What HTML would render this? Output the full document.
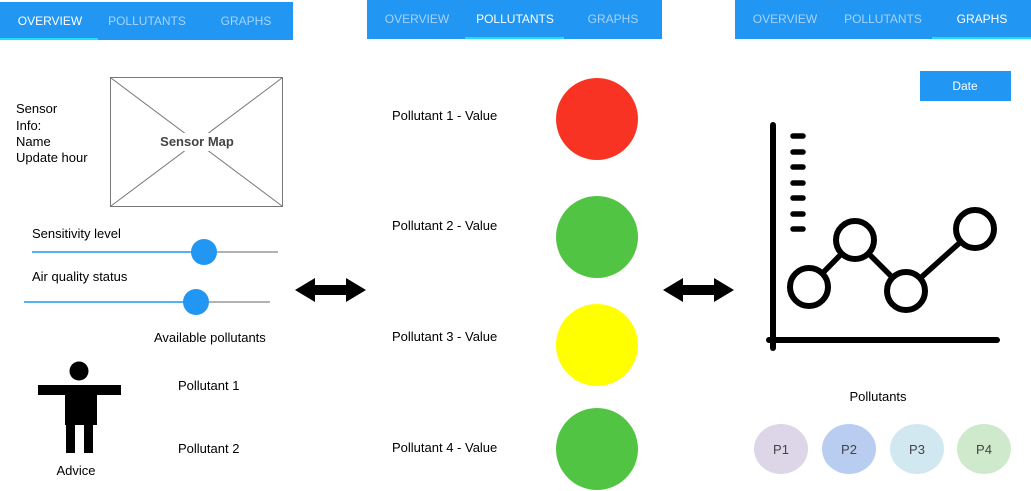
<!DOCTYPE html>
<html><head><style>
html,body{margin:0;padding:0;background:#fff;}
svg{display:block;font-family:"Liberation Sans",Arial,sans-serif;}
</style></head><body>
<svg width="1031" height="491" viewBox="0 0 1031 491" xmlns="http://www.w3.org/2000/svg">
<rect x="0" y="2" width="293" height="38" fill="#2196f3"/>
<rect x="0" y="38" width="98" height="2" fill="#18e0ff"/>
<g font-size="12" text-anchor="middle">
<text x="50" y="25" fill="#fff">OVERVIEW</text>
<text x="147" y="25" fill="#a6d4fa">POLLUTANTS</text>
<text x="246" y="25" fill="#a6d4fa">GRAPHS</text>
</g>
<rect x="367" y="0" width="295" height="39" fill="#2196f3"/>
<rect x="465" y="37" width="99" height="2" fill="#18e0ff"/>
<g font-size="12" text-anchor="middle">
<text x="417" y="23" fill="#a6d4fa">OVERVIEW</text>
<text x="515" y="23" fill="#fff">POLLUTANTS</text>
<text x="613" y="23" fill="#a6d4fa">GRAPHS</text>
</g>
<rect x="735" y="0" width="296" height="39" fill="#2196f3"/>
<rect x="932" y="37" width="99" height="2" fill="#18e0ff"/>
<g font-size="12" text-anchor="middle">
<text x="785" y="23" fill="#a6d4fa">OVERVIEW</text>
<text x="883" y="23" fill="#a6d4fa">POLLUTANTS</text>
<text x="982" y="23" fill="#fff">GRAPHS</text>
</g>
<g font-size="13" fill="#000">
<text x="16" y="113">Sensor</text>
<text x="16" y="130">Info:</text>
<text x="16" y="146">Name</text>
<text x="16" y="162">Update hour</text>
</g>
<rect x="110.5" y="77.5" width="172" height="129" fill="none" stroke="#777" stroke-width="1"/>
<line x1="111" y1="78" x2="282" y2="206" stroke="#777"/>
<line x1="282" y1="78" x2="111" y2="206" stroke="#777"/>
<rect x="155" y="133" width="82" height="18" fill="#fff"/>
<text x="197" y="146" font-size="13" font-weight="bold" fill="#444" text-anchor="middle">Sensor Map</text>
<text x="32" y="238" font-size="13">Sensitivity level</text>
<line x1="32" y1="252" x2="204" y2="252" stroke="#2196f3" stroke-width="1.5"/>
<line x1="204" y1="252" x2="278" y2="252" stroke="#999" stroke-width="1.5"/>
<circle cx="204" cy="252" r="13" fill="#2196f3"/>
<text x="32" y="281" font-size="13">Air quality status</text>
<line x1="24" y1="302" x2="196" y2="302" stroke="#2196f3" stroke-width="1.5"/>
<line x1="196" y1="302" x2="270" y2="302" stroke="#999" stroke-width="1.5"/>
<circle cx="196" cy="302" r="13" fill="#2196f3"/>
<text x="154" y="342" font-size="13">Available pollutants</text>
<text x="178" y="390" font-size="13">Pollutant 1</text>
<text x="178" y="453" font-size="13">Pollutant 2</text>
<circle cx="79" cy="371" r="9.5"/>
<rect x="38" y="385" width="83" height="10"/>
<rect x="65" y="385" width="32" height="40"/>
<rect x="66" y="420" width="9" height="33"/>
<rect x="84" y="420" width="9" height="33"/>
<text x="76" y="475" font-size="13" text-anchor="middle">Advice</text>
<polygon points="295,290 315,278 315,285 346,285 346,278 366,290 346,302 346,295 315,295 315,302"/>
<polygon points="663,290 683,278 683,285 714,285 714,278 734,290 714,302 714,295 683,295 683,302"/>
<g font-size="13">
<text x="392" y="120">Pollutant 1 - Value</text>
<text x="392" y="230">Pollutant 2 - Value</text>
<text x="392" y="341">Pollutant 3 - Value</text>
<text x="392" y="452">Pollutant 4 - Value</text>
</g>
<circle cx="597" cy="119" r="41" fill="#f93324"/>
<circle cx="597" cy="237" r="41" fill="#52c443"/>
<circle cx="597" cy="345" r="41" fill="#ffff00"/>
<circle cx="597" cy="449" r="41" fill="#52c443"/>
<rect x="920" y="71" width="91" height="30" fill="#2196f3"/>
<text x="965" y="90" font-size="12" fill="#fff" text-anchor="middle">Date</text>
<g stroke="#000" stroke-linecap="round" fill="none">
<line x1="773" y1="125" x2="773" y2="348" stroke-width="6"/>
<line x1="769" y1="340" x2="997" y2="340" stroke-width="6"/>
<g stroke-width="5.5">
<line x1="793" y1="136" x2="803" y2="136"/>
<line x1="793" y1="152" x2="803" y2="152"/>
<line x1="793" y1="167" x2="803" y2="167"/>
<line x1="793" y1="183" x2="803" y2="183"/>
<line x1="793" y1="198" x2="803" y2="198"/>
<line x1="793" y1="214" x2="803" y2="214"/>
<line x1="793" y1="229" x2="803" y2="229"/>
</g>
<g stroke-width="5.5">
<line x1="809" y1="287" x2="855" y2="240"/>
<line x1="855" y1="240" x2="906" y2="291"/>
<line x1="906" y1="291" x2="975" y2="229"/>
</g>
<g stroke-width="6" fill="#fff">
<circle cx="809" cy="287" r="19"/>
<circle cx="855" cy="240" r="19"/>
<circle cx="906" cy="291" r="19"/>
<circle cx="975" cy="229" r="19"/>
</g>
</g>
<text x="878" y="401" font-size="13" text-anchor="middle">Pollutants</text>
<ellipse cx="781" cy="449" rx="27" ry="25" fill="#dcd6e8"/>
<ellipse cx="849" cy="449" rx="27" ry="25" fill="#b9cdf0"/>
<ellipse cx="917" cy="449" rx="27" ry="25" fill="#d2e8f0"/>
<ellipse cx="984" cy="449" rx="27" ry="25" fill="#cfe9cc"/>
<g font-size="13" fill="#444" text-anchor="middle">
<text x="781" y="454">P1</text>
<text x="849" y="454">P2</text>
<text x="917" y="454">P3</text>
<text x="984" y="454">P4</text>
</g>
</svg>
</body></html>
